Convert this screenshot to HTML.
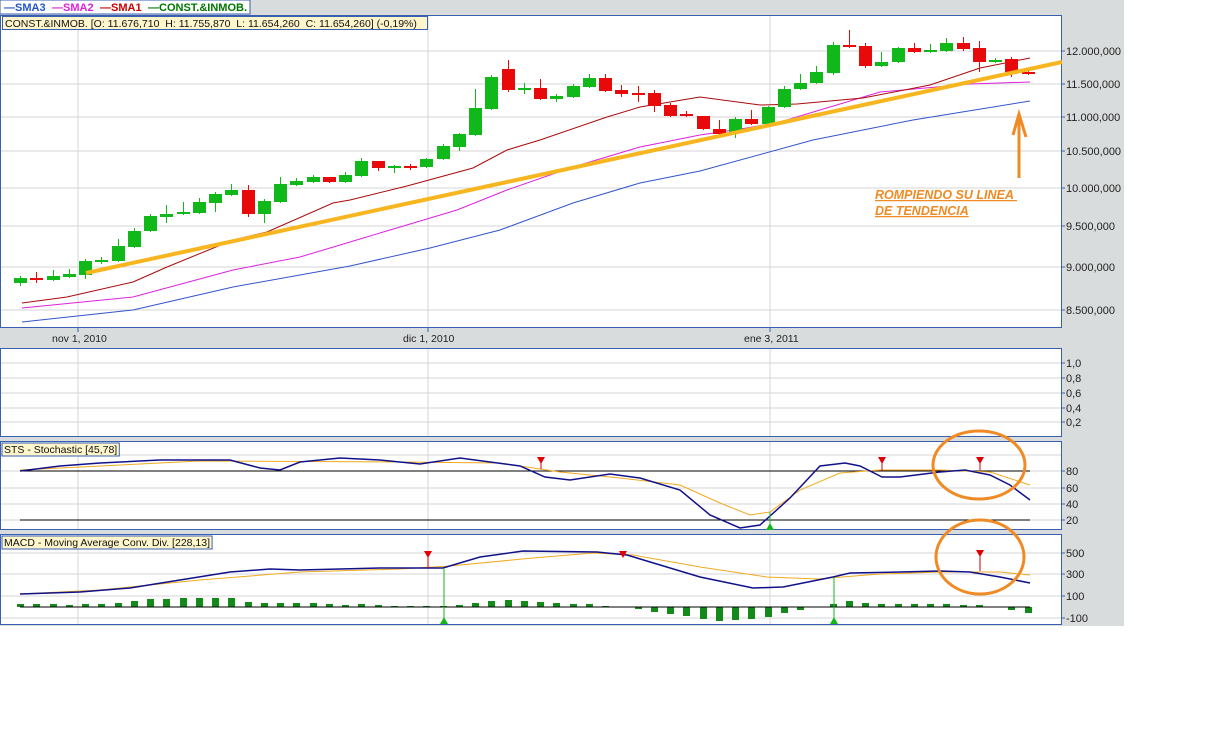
<!DOCTYPE html>
<html><head><meta charset="utf-8"><style>
html,body{margin:0;padding:0;background:#fff;width:1218px;height:754px;overflow:hidden;font-family:"Liberation Sans",sans-serif}
svg text{font-family:"Liberation Sans",sans-serif}
</style></head><body>
<svg id="s" width="1218" height="754" xmlns="http://www.w3.org/2000/svg"></svg>
<script>
var o=[];
function R(x,y,w,h,f,s){o.push('<rect x="'+x+'" y="'+y+'" width="'+w+'" height="'+h+'" fill="'+f+'"'+(s?' stroke="'+s+'"':'')+'/>');}
function L(x1,y1,x2,y2,c,w){o.push('<line x1="'+x1+'" y1="'+y1+'" x2="'+x2+'" y2="'+y2+'" stroke="'+c+'" stroke-width="'+(w||1)+'"/>');}
function P(pts,c,w){o.push('<polyline fill="none" stroke="'+c+'" stroke-width="'+(w||1)+'" points="'+pts.map(function(p){return p.join(',')}).join(' ')+'"/>');}
function T(x,y,t,c,sz,extra){o.push('<text x="'+x+'" y="'+y+'" fill="'+(c||'#000')+'" font-size="'+(sz||11)+'" '+(extra||'')+'>'+t+'</text>');}
R(0,0,1124,626,'#d9dcdc');
// top legend
R(0,0,250,14,'#fff','#3a5fb0');
T(4,11,'—SMA3','#2255cc',11,'font-weight="bold"');
T(52,11,'—SMA2','#dd22dd',11,'font-weight="bold"');
T(100,11,'—SMA1','#cc0000',11,'font-weight="bold"');
T(148,11,'—CONST.&amp;INMOB.','#007700',11,'font-weight="bold"');
// main panel
R(0.5,15.5,1061,312,'#fff','#3a5fb0');
var gy=[51,84,117,151,188,226,267,310],gl=['12.000,000','11.500,000','11.000,000','10.500,000','10.000,000','9.500,000','9.000,000','8.500,000'];
gy.forEach(function(y,i){L(1,y,1061,y,'#d4d4d4');L(1061,y,1065,y,'#3a5fb0');T(1066,y+4,gl[i],'#222',11);});
[78,428,770].forEach(function(x){L(x,16,x,327,'#d0d4dc');L(x,327,x,332,'#3a5fb0');});
T(52,342,'nov 1, 2010','#222',10.5);T(403,342,'dic 1, 2010','#222',10.5);T(744,342,'ene 3, 2011','#222',10.5);
// MAs
P([[22,322],[133,310],[233,287],[350,266],[430,248],[500,230],[573,203],[640,183],[700,171],[813,140],[913,120],[1030,101]],'#3355cc');
P([[22,308],[133,297],[233,270],[300,257],[350,242],[390,230],[457,210],[507,190],[573,167],[640,147],[700,135],[747,128],[780,122],[880,92],[970,84],[1030,82]],'#dd22dd');
P([[22,303],[67,297],[133,282],[167,267],[233,240],[267,232],[333,203],[350,200],[407,186],[473,168],[507,150],[540,140],[607,117],[640,107],[700,97],[760,105],[797,104],[863,98],[930,85],[980,68],[1030,58]],'#aa0a0a');
// candles [type,o/top,bottom,high,low]
var C=[['g',278,283,276,286],['r',278,279,272,283],['g',276,280,270,281],['g',274,277,269,278],['g',261,275,259,279],['g',260,262,257,264],['g',246,261,239,262],['g',231,247,228,248],['g',216,231,214,232],['g',214,217,205,223],['g',212,214,202,215],['g',202,213,198,214],['g',194,203,192,212],['g',190,195,184,196],['r',190,214,185,217],['g',201,214,199,223],['g',184,202,177,203],['g',181,185,178,186],['g',177,182,175,183],['r',177,182,177,183],
['g',175,182,172,183],['g',161,176,158,177],['r',161,168,161,171],['g',166,168,165,173],['r',166,167,164,170],['g',159,167,158,168],['g',146,159,144,160],['g',134,147,133,151],['g',108,135,89,136],['g',77,109,75,110],['r',69,90,60,92],['g',88,90,83,94],['r',88,99,79,100],['g',96,99,94,102],['g',86,97,84,98],['g',78,87,74,88],['r',78,91,74,92],['r',90,94,85,97],['r',93,94,86,102],['r',93,106,90,112],['r',105,116,103,117],['r',114,116,111,117],['r',116,129,116,130],['r',129,134,120,135],['g',119,132,117,138],['r',119,124,110,125],['g',107,124,106,125],['g',89,107,86,108],['g',83,89,74,90],['g',72,83,66,84],['g',45,73,42,75],['r',45,47,30,48],['r',46,66,43,68],['g',62,66,52,67],['g',48,62,47,63],['r',48,52,43,53],['g',50,52,44,53],['g',43,51,38,52],['r',43,49,37,51],['r',48,62,41,72],['g',60,61,58,63],['r',59,72,57,77],['r',72,74,71,75]];
C.forEach(function(c,i){var x=Math.round(20+16.25*i),col=c[0]=='g'?'#11b81a':'#e80a0a';L(x+0.5,c[3],x+0.5,c[4],col);R(x-6,c[1],13,Math.max(2,c[2]-c[1]),col);});
// trend line
L(86,273,1062,62,'#f7b620',4);
// title box
R(2.5,16.5,425,13,'#fff6cc','#3a5fb0');
T(5,27,'CONST.&amp;INMOB. [O: 11.676,710  H: 11.755,870  L: 11.654,260  C: 11.654,260] (-0,19%)','#111',10.5,'xml:space="preserve"');
// annotation
T(875,199,'ROMPIENDO SU LINEA ','#f08a24',12.5,'font-weight="bold" font-style="italic" text-decoration="underline" xml:space="preserve"');
T(875,215,'DE TENDENCIA','#f08a24',12.5,'font-weight="bold" font-style="italic" text-decoration="underline"');
L(1019,178,1019,116,'#f08a24',3);P([[1013,135],[1019,114],[1026,137]],'#f08a24',3);
// panel 1
R(0.5,348.5,1061,88,'#fff','#3a5fb0');
[[363,'1,0'],[378,'0,8'],[393,'0,6'],[408,'0,4'],[422,'0,2']].forEach(function(a){L(1,a[0],1061,a[0],'#d4d4d4');L(1061,a[0],1065,a[0],'#3a5fb0');T(1066,a[0]+4,a[1],'#222',11);});
[78,428,770].forEach(function(x){L(x,349,x,436,'#d0d4dc');});
// panel 2 stochastic
R(0.5,441.5,1061,88,'#fff','#3a5fb0');
[[455,''],[471,'80'],[488,'60'],[504,'40'],[520,'20']].forEach(function(a){L(1,a[0],1061,a[0],'#d4d4d4');if(a[1]){L(1061,a[0],1065,a[0],'#3a5fb0');T(1066,a[0]+4,a[1],'#222',11);}});
[78,428,770].forEach(function(x){L(x,442,x,529,'#d0d4dc');});
L(20,471,1030,471,'#000');L(20,520,1030,520,'#000');
P([[20,470],[200,461],[400,462],[500,463],[560,472],[620,478],[680,485],[720,503],[750,515],[770,512],[800,490],[840,473],[880,470],[940,470],[990,472],[1030,485]],'#f0aa20');
P([[20,471],[60,466],[100,463],[160,460],[230,460],[260,468],[280,470],[300,462],[340,458],[380,460],[420,464],[460,458],[490,462],[520,466],[545,477],[570,480],[610,474],[640,478],[680,490],[710,515],[740,528],[760,525],[790,498],[820,466],[845,463],[860,466],[882,477],[900,477],[940,472],[965,470],[990,475],[1010,485],[1030,500]],'#11118a',1.5);
function dn(x,y,y2){L(x,y,x,y2,'#cc0000');o.push('<polygon points="'+(x-4)+','+y+' '+(x+4)+','+y+' '+x+','+(y+7)+'" fill="#e00000"/>');}
function up(x,y1,y2){L(x,y1,x,y2,'#11b81a');o.push('<polygon points="'+(x-4)+','+y2+' '+(x+4)+','+y2+' '+x+','+(y2-7)+'" fill="#11b81a"/>');}
T(4,453,'STS - Stochastic [45,78]','#111',10.5);
dn(541,457,469);dn(882,457,471);dn(980,457,470);up(770,512,530);
// panel 3 MACD
R(0.5,534.5,1061,90,'#fff','#3a5fb0');
[[553,'500'],[574,'300'],[596,'100'],[618,'-100']].forEach(function(a){L(1,a[0],1061,a[0],'#d4d4d4');L(1061,a[0],1065,a[0],'#3a5fb0');T(1066,a[0]+4,a[1],'#222',11);});
[78,428,770].forEach(function(x){L(x,535,x,624,'#d0d4dc');});
var H=[3,3,3,2,3,3,4,6,8,8,9,9,9,9,5,4,4,4,4,3,2,3,2,1,1,1,1,2,4,6,7,6,5,4,3,3,1,0,-2,-5,-7,-9,-12,-14,-13,-12,-10,-6,-3,0,3,6,4,3,3,3,3,3,2,2,0,-3,-6];
H.forEach(function(h,i){if(h==0)return;var x=Math.round(20+16.25*i);R(x-3,h>0?607-h:607,7,Math.abs(h),'#138a1a');});
L(20,607,1030,607,'#000');
P([[20,594],[100,590],[200,580],[300,572],[400,569],[450,566],[533,558],[593,553],[633,555],[700,567],[767,577],[817,579],[880,574],[940,572],[1000,572],[1030,575]],'#f0aa20');
P([[20,594],[80,592],[130,588],[180,580],[230,572],[270,569],[300,570],[340,569],[380,568],[400,568],[443,568],[480,557],[523,551],[597,552],[627,555],[700,577],[753,588],[783,587],[833,577],[850,573],[900,572],[940,571],[970,572],[1000,577],[1030,583]],'#11118a',1.5);
T(4,546,'MACD - Moving Average Conv. Div. [228,13]','#111',10.5);
dn(428,551,568);dn(623,551,556);dn(980,550,571);up(444,568,624);up(834,577,624);
// title boxes
o.splice(o.length,0);
// ovals
o.push('<ellipse cx="979" cy="465" rx="46" ry="34" fill="none" stroke="#f08a24" stroke-width="3"/>');
o.push('<ellipse cx="980" cy="557" rx="44" ry="37" fill="none" stroke="#f08a24" stroke-width="3"/>');
document.getElementById('s').innerHTML=o.join('');
// add label backgrounds
var s=document.getElementById('s');
s.querySelectorAll('text').forEach(function(t){var v=t.textContent;if(v.indexOf('STS')==0||v.indexOf('MACD')==0){var b=t.getBBox();var r=document.createElementNS('http://www.w3.org/2000/svg','rect');r.setAttribute('x',b.x-2);r.setAttribute('y',b.y-1);r.setAttribute('width',b.width+4);r.setAttribute('height',b.height+1);r.setAttribute('fill','#fff6cc');r.setAttribute('stroke','#3a5fb0');s.insertBefore(r,t);}});
</script>
</body></html>
